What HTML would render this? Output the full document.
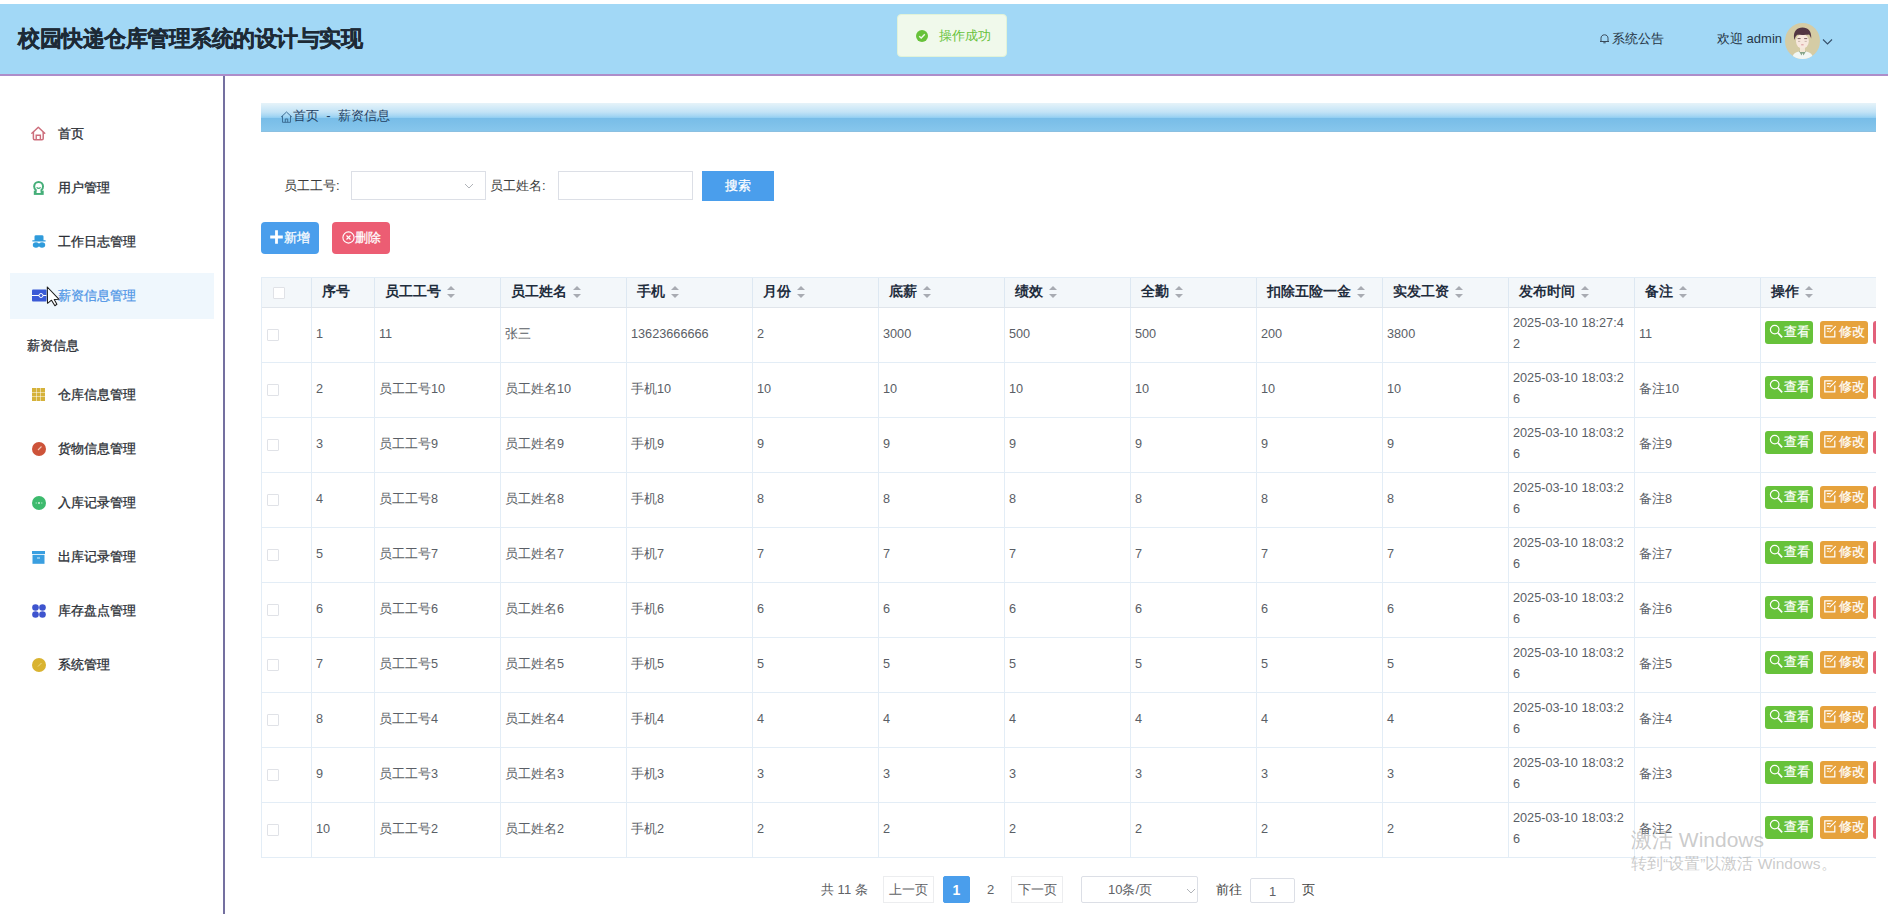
<!DOCTYPE html>
<html><head><meta charset="utf-8"><title>薪资信息</title>
<style>
html,body{margin:0;padding:0;}
body{width:1896px;height:914px;overflow:hidden;position:relative;background:#fff;font-family:"Liberation Sans",sans-serif;color:#303133;}
.a{position:absolute;white-space:nowrap;}
#hdr{position:absolute;left:0;top:4px;width:1888px;height:70px;background:#A2D8F6;border-bottom:2px solid #AE8DC9;}
#title{left:18px;top:22px;font-size:22px;letter-spacing:-0.5px;font-weight:bold;color:#1D2A36;-webkit-text-stroke:0.35px #1D2A36;line-height:34px;}
#toast{left:897px;top:14px;width:108px;height:41px;background:#F0F9EB;border:1px solid #E1F3D8;border-radius:4px;}
#toast .ic{position:absolute;left:18px;top:15px;width:12px;height:12px;border-radius:50%;background:#67C23A;}
#toast .tx{position:absolute;left:41px;top:12px;font-size:13px;line-height:18px;color:#67C23A;}
#notice{left:1599px;top:29.8px;font-size:13px;line-height:18px;color:#263646;}
#welcome{left:1717px;top:30.3px;font-size:13px;line-height:18px;color:#263646;}
#avatar{left:1785px;top:23px;width:35px;height:36px;border-radius:50%;background:#D5CCA5;overflow:hidden;}
#chev{left:1822px;top:37px;}
#side{position:absolute;left:223px;top:76px;width:2px;height:838px;background:#7470A0;}
.mi{position:absolute;left:0;width:214px;height:46px;}
.mi .ico{position:absolute;left:32px;}
.mi .lb{position:absolute;left:58px;top:15px;font-size:12.6px;line-height:18px;color:#2B2F36;-webkit-text-stroke:0.3px #2B2F36;}
#act{left:10px;top:273px;width:204px;height:46px;background:#EFF7FD;}
#crumb{left:261px;top:103px;width:1615px;height:29px;background:linear-gradient(to bottom,#E6F3F9 0px,#D6ECF8 4px,#C2E3F6 9px,#A4D6F3 13px,#93CFF2 14.5px,#78BDE8 15.5px,#7DC0E9 20px,#86C6EC 27.5px,#8DBDDC 29px);}
#crumb .tx{position:absolute;left:32px;top:4px;font-size:13px;line-height:18px;color:#1F3F62;}
.lbl{font-size:13px;line-height:18px;color:#3A3A3A;margin-top:1px;}
.inp{position:absolute;box-sizing:border-box;border:1px solid #DCDFE6;background:#fff;}
.btn{position:absolute;box-sizing:border-box;color:#fff;font-size:13px;line-height:18px;text-align:center;-webkit-text-stroke:0.25px #fff;}
#tbl{position:absolute;left:261px;top:277px;width:1615px;height:581px;overflow:hidden;border-top:1px solid #E3EDF6;border-left:1px solid #E3EDF6;box-sizing:border-box;}
.hrow{position:absolute;left:0;top:0;width:1700px;height:30px;background:#F3F7FA;border-bottom:1px solid #E0E5EB;box-sizing:border-box;}
.hc{position:absolute;top:0;height:29px;box-sizing:border-box;border-right:1px solid #DDE8F2;display:flex;align-items:center;padding-left:9.6px;}
.ht{font-size:13.6px;line-height:18px;font-weight:bold;color:#1F2D3D;white-space:nowrap;position:relative;top:-0.4px;}
.sort{position:relative;margin-left:6px;width:8px;height:12px;top:-0.3px;}
.sort i{position:absolute;left:0;width:0;height:0;border-left:4px solid transparent;border-right:4px solid transparent;}
.sort .up{top:0;border-bottom:4px solid #A8ABB2;}
.sort .dn{top:8px;border-top:4px solid #A8ABB2;}
.brow{position:absolute;left:0;width:1700px;height:55px;border-bottom:1px solid #E3EDF6;box-sizing:border-box;}
.bc{position:absolute;top:0;height:54px;box-sizing:border-box;border-right:1px solid #E3EDF6;}
.bt{position:absolute;left:4px;top:17.3px;font-size:12.7px;line-height:18px;color:#5A5E66;}
.bt.dt{top:4.6px;line-height:21.3px;}
.cb{position:absolute;width:12px;height:12px;box-sizing:border-box;border:1px solid #E0E2E7;background:#fff;border-radius:1px;}
.hcb{position:relative;left:1.4px;top:0;}
.bcb{left:5px;top:21px;}
.ob{position:absolute;top:13px;height:23px;width:48px;border-radius:3px;color:#fff;font-size:12.5px;line-height:23px;-webkit-text-stroke:0.2px #fff;}
.ob svg{position:absolute;left:5px;top:5px;}
.ob.g{left:4px;background:#67C23A;padding-left:19px;box-sizing:border-box;}
.ob.o{left:58.5px;background:#E6A23C;padding-left:19px;box-sizing:border-box;}
.ob.r{left:112px;background:#E2607A;}
.pg{font-size:13px;line-height:18px;color:#606266;}
.pbox{position:absolute;box-sizing:border-box;border:1px solid #ECEDEF;background:#fff;font-size:13px;line-height:26px;color:#606266;text-align:center;}
#wm1{left:1631px;top:826.5px;font-size:21px;line-height:26px;color:rgba(170,170,170,0.62);}
#wm2{left:1631px;top:854px;font-size:15.5px;line-height:19px;color:rgba(170,170,170,0.62);}

</style></head>
<body>
<div id="hdr"></div>
<div class="a" id="title">校园快递仓库管理系统的设计与实现</div>
<div class="a" id="toast"><span class="ic"><svg width="12" height="12" viewBox="0 0 12 12" style="position:absolute;left:0;top:0"><path d="M3.2 6.2L5.2 8L8.8 4.3" fill="none" stroke="#F0F9EB" stroke-width="1.4"/></svg></span><span class="tx">操作成功</span></div>
<div class="a" id="notice"><svg width="11" height="11" viewBox="0 0 11 11" style="position:relative;top:1px;margin-right:2px"><path d="M2 8.5V5.2C2 3.2 3.4 1.8 5.5 1.8S9 3.2 9 5.2V8.5ZM1 8.5H10M4.3 9.8H6.7" fill="none" stroke="#3A4A5A" stroke-width="1"/></svg>系统公告</div>
<div class="a" id="welcome">欢迎 admin</div>
<div class="a" id="avatar"><svg width="35" height="36" viewBox="0 0 35 36">
<path d="M7 36C7.5 30.5 11 28.3 17.5 28.3S27.5 30.5 28.5 36Z" fill="#F2F7F4"/>
<path d="M14 28.2L16.5 32.5L17.5 30L18.5 32.5L21 28.2Z" fill="#86A58A"/>
<rect x="15" y="23" width="5" height="6" fill="#F3E7D6"/>
<ellipse cx="17.4" cy="18.3" rx="6.4" ry="7.2" fill="#F7E8DE"/>
<path d="M9 15C8.2 8 12 4.4 17.5 4.4S26.8 8 26.2 15.5C25.5 13.5 25 12.5 24 11.5C21 12 16 12 12.5 11.8C11 12.6 10.2 14 9.6 17Z" fill="#523643"/>
<path d="M12.6 15.6H15.6M19.2 15.6H22.2" stroke="#6A5050" stroke-width="0.9"/>
<path d="M13 18.4H15.2M19.6 18.4H21.8" stroke="#B8A49A" stroke-width="0.7"/>
<path d="M16.2 21.8H18.6" stroke="#D9959A" stroke-width="1"/>
</svg></div>
<svg class="a" id="chev" width="11" height="9" viewBox="0 0 11 9"><path d="M1 2.5L5.5 7L10 2.5" fill="none" stroke="#35506A" stroke-width="1.1"/></svg>

<div id="side"></div>
<div class="a" id="act"></div>
<!-- menu -->
<div class="mi" style="top:110px">
  <svg class="ico" style="top:16px;left:31px" width="15" height="15" viewBox="0 0 15 15"><path d="M0.9 7.2L7.3 1.2L13.7 7.2" fill="none" stroke="#CD6E7C" stroke-width="1.5" stroke-linecap="round" stroke-linejoin="round"/><path d="M2.4 6V12.6Q2.4 13.8 3.6 13.8H11Q12.2 13.8 12.2 12.6V6" fill="none" stroke="#CD6E7C" stroke-width="1.5"/><path d="M5.2 13.8V9.3H9.4V13.8" fill="none" stroke="#CD6E7C" stroke-width="1.4"/></svg>
  <span class="lb">首页</span>
</div>
<div class="mi" style="top:164px">
  <svg class="ico" style="top:17px" width="14" height="14" viewBox="0 0 14 14"><circle cx="6.6" cy="5.4" r="5.4" fill="#44AE78"/><rect x="1.8" y="9.6" width="9.9" height="4.3" fill="#44AE78"/><circle cx="6.6" cy="5.4" r="3.4" fill="#fff"/><path d="M5 7.5H8.2L8.7 12H4.5Z" fill="#fff"/><path d="M4.6 6.4Q6.6 8.4 8.6 6.4" fill="none" stroke="#44AE78" stroke-width="1.3"/></svg>
  <span class="lb">用户管理</span>
</div>
<div class="mi" style="top:218px">
  <svg class="ico" style="top:17px" width="14" height="13" viewBox="0 0 14 13"><path d="M2.5 1.5Q2.5 0.3 4 0.3H10Q11.5 0.3 11.5 1.5V5.2H13.6V6.6H0.4V5.2H2.5Z" fill="#2F9BDB"/><ellipse cx="4" cy="10" rx="3.2" ry="2.7" fill="#2F9BDB"/><ellipse cx="10" cy="10" rx="3.2" ry="2.7" fill="#2F9BDB"/></svg>
  <span class="lb">工作日志管理</span>
</div>
<div class="mi" style="top:272px">
  <svg class="ico" style="top:17px" width="15" height="13" viewBox="0 0 15 13"><rect x="0" y="0.5" width="14.5" height="12" rx="1" fill="#3B5AD6"/><path d="M0 6.5H14.5" stroke="#fff" stroke-width="1"/><circle cx="9" cy="6.5" r="2" fill="#3B5AD6" stroke="#fff" stroke-width="1"/></svg>
  <span class="lb" style="color:#4F96E6;-webkit-text-stroke:0.25px #4F96E6">薪资信息管理</span>
</div>
<div class="mi" style="top:322px">
  <span class="lb" style="left:27px">薪资信息</span>
</div>
<div class="mi" style="top:371px">
  <svg class="ico" style="top:17px" width="13" height="13" viewBox="0 0 13 13" fill="#D5B23A"><rect x="0" y="0" width="4" height="4"/><rect x="4.5" y="0" width="4" height="4"/><rect x="9" y="0" width="4" height="4"/><rect x="0" y="4.5" width="4" height="4"/><rect x="4.5" y="4.5" width="4" height="4"/><rect x="9" y="4.5" width="4" height="4"/><rect x="0" y="9" width="4" height="4"/><rect x="4.5" y="9" width="4" height="4"/><rect x="9" y="9" width="4" height="4"/></svg>
  <span class="lb">仓库信息管理</span>
</div>
<div class="mi" style="top:425px">
  <svg class="ico" style="top:17px" width="14" height="14" viewBox="0 0 14 14"><circle cx="7" cy="7" r="7" fill="#CD5339"/><path d="M6 8L9.5 4.5" stroke="#F2C8B8" stroke-width="1.1"/></svg>
  <span class="lb">货物信息管理</span>
</div>
<div class="mi" style="top:479px">
  <svg class="ico" style="top:17px" width="14" height="14" viewBox="0 0 14 14"><circle cx="7" cy="7" r="7" fill="#3DBA6D"/><circle cx="4.2" cy="7" r="0.7" fill="#A8E4BE"/><circle cx="7" cy="7" r="0.9" fill="#E4F6EA"/><circle cx="9.8" cy="7" r="0.7" fill="#A8E4BE"/></svg>
  <span class="lb">入库记录管理</span>
</div>
<div class="mi" style="top:533px">
  <svg class="ico" style="top:18px" width="13" height="13" viewBox="0 0 13 13"><rect x="0" y="0" width="13" height="3" fill="#3A9FE0"/><rect x="0.5" y="3.8" width="12" height="9" fill="#3A9FE0"/><path d="M5 7H8" stroke="#D8EEFA" stroke-width="1"/></svg>
  <span class="lb">出库记录管理</span>
</div>
<div class="mi" style="top:587px">
  <svg class="ico" style="top:17px" width="14" height="14" viewBox="0 0 14 14" fill="#3E54CE"><circle cx="3.5" cy="3.5" r="3.3"/><circle cx="10.5" cy="3.5" r="3.3"/><circle cx="3.5" cy="10.5" r="3.3"/><circle cx="10.5" cy="10.5" r="3.3"/></svg>
  <span class="lb">库存盘点管理</span>
</div>
<div class="mi" style="top:641px">
  <svg class="ico" style="top:17px" width="14" height="14" viewBox="0 0 14 14"><circle cx="7" cy="7" r="7" fill="#D9B330"/><path d="M6 8.5L9.5 5" stroke="#EEDC8A" stroke-width="1"/></svg>
  <span class="lb">系统管理</span>
</div>
<!-- cursor -->
<svg class="a" style="left:46px;top:286px" width="14" height="21" viewBox="0 0 14 21"><path d="M1.3 1L1.5 17.3L5.5 14.2L8.9 19.7L10.9 18.3L8.2 13.6L12.8 13.2Z" fill="#fff" stroke="#1A1A1A" stroke-width="1.05" stroke-linejoin="round"/></svg>

<div class="a" id="crumb"><svg width="13" height="12" viewBox="0 0 13 12" style="position:absolute;left:19px;top:8px"><path d="M1 6.2L6.5 1L12 6.2M2.5 5V11.3H10.5V5M5.3 11.3V8H7.7V11.3" fill="none" stroke="#3E6F96" stroke-width="1"/></svg><span class="tx">首页&nbsp;&nbsp;-&nbsp;&nbsp;薪资信息</span></div>

<!-- search -->
<div class="a lbl" style="left:284px;top:176px">员工工号:</div>
<div class="inp" style="left:351px;top:171px;width:135px;height:29px"><svg width="10" height="7" viewBox="0 0 10 7" style="position:absolute;left:112px;top:11px"><path d="M1 1L5 5L9 1" fill="none" stroke="#B0B3B8" stroke-width="1"/></svg></div>
<div class="a lbl" style="left:490px;top:176px">员工姓名:</div>
<div class="inp" style="left:558px;top:171px;width:135px;height:29px"></div>
<div class="btn" style="left:702px;top:171px;width:72px;height:30px;background:#4A9EEC;line-height:30px">搜索</div>

<div class="btn" style="left:261px;top:222px;width:58px;height:32px;background:#4A9EEC;border-radius:4px;line-height:32px"><svg width="13" height="14" viewBox="0 0 13 14" style="position:relative;top:1.5px;margin-right:0.5px"><path d="M6.5 0.3V13.7M0.2 7H12.8" stroke="#fff" stroke-width="2.8"/></svg>新增</div>
<div class="btn" style="left:332px;top:222px;width:58px;height:32px;background:#EC5D73;border-radius:4px;line-height:32px"><svg width="13" height="13" viewBox="0 0 13 13" style="position:relative;top:2px"><circle cx="6.5" cy="6.5" r="5.6" fill="none" stroke="#fff" stroke-width="1.1"/><path d="M4.5 4.5L8.5 8.5M8.5 4.5L4.5 8.5" stroke="#fff" stroke-width="1.1"/></svg>删除</div>

<div id="tbl">
<div class="hrow">
<div class="hc" style="left:0px;width:50px"><span class="cb hcb"></span></div>
<div class="hc" style="left:50px;width:63px"><span class="ht">序号</span></div>
<div class="hc" style="left:113px;width:126px"><span class="ht">员工工号</span><span class="sort"><i class="up"></i><i class="dn"></i></span></div>
<div class="hc" style="left:239px;width:126px"><span class="ht">员工姓名</span><span class="sort"><i class="up"></i><i class="dn"></i></span></div>
<div class="hc" style="left:365px;width:126px"><span class="ht">手机</span><span class="sort"><i class="up"></i><i class="dn"></i></span></div>
<div class="hc" style="left:491px;width:126px"><span class="ht">月份</span><span class="sort"><i class="up"></i><i class="dn"></i></span></div>
<div class="hc" style="left:617px;width:126px"><span class="ht">底薪</span><span class="sort"><i class="up"></i><i class="dn"></i></span></div>
<div class="hc" style="left:743px;width:126px"><span class="ht">绩效</span><span class="sort"><i class="up"></i><i class="dn"></i></span></div>
<div class="hc" style="left:869px;width:126px"><span class="ht">全勤</span><span class="sort"><i class="up"></i><i class="dn"></i></span></div>
<div class="hc" style="left:995px;width:126px"><span class="ht">扣除五险一金</span><span class="sort"><i class="up"></i><i class="dn"></i></span></div>
<div class="hc" style="left:1121px;width:126px"><span class="ht">实发工资</span><span class="sort"><i class="up"></i><i class="dn"></i></span></div>
<div class="hc" style="left:1247px;width:126px"><span class="ht">发布时间</span><span class="sort"><i class="up"></i><i class="dn"></i></span></div>
<div class="hc" style="left:1373px;width:126px"><span class="ht">备注</span><span class="sort"><i class="up"></i><i class="dn"></i></span></div>
<div class="hc" style="left:1499px;width:116px"><span class="ht">操作</span><span class="sort"><i class="up"></i><i class="dn"></i></span></div>
</div>
<div class="brow" style="top:30px">
<div class="bc" style="left:0px;width:50px"><span class="cb bcb"></span></div>
<div class="bc" style="left:50px;width:63px"><span class="bt">1</span></div>
<div class="bc" style="left:113px;width:126px"><span class="bt">11</span></div>
<div class="bc" style="left:239px;width:126px"><span class="bt">张三</span></div>
<div class="bc" style="left:365px;width:126px"><span class="bt">13623666666</span></div>
<div class="bc" style="left:491px;width:126px"><span class="bt">2</span></div>
<div class="bc" style="left:617px;width:126px"><span class="bt">3000</span></div>
<div class="bc" style="left:743px;width:126px"><span class="bt">500</span></div>
<div class="bc" style="left:869px;width:126px"><span class="bt">500</span></div>
<div class="bc" style="left:995px;width:126px"><span class="bt">200</span></div>
<div class="bc" style="left:1121px;width:126px"><span class="bt">3800</span></div>
<div class="bc" style="left:1247px;width:126px"><span class="bt dt">2025-03-10 18:27:4<br>2</span></div>
<div class="bc" style="left:1373px;width:126px"><span class="bt">11</span></div>
<div class="bc" style="left:1499px;width:116px"><span class="ob g"><svg width="14" height="14" viewBox="0 0 14 14" style="left:4px;top:3px"><circle cx="5.7" cy="5.6" r="4.3" fill="none" stroke="#fff" stroke-width="1.2"/><path d="M8.9 8.9L13.2 13.3" stroke="#fff" stroke-width="1.7"/></svg>查看</span><span class="ob o"><svg width="13" height="13" viewBox="0 0 13 13" style="left:4px;top:4px"><path d="M8.5 0.8H0.8V11.8H10.8V5.5" fill="none" stroke="#fff" stroke-width="1.2"/><path d="M2.8 3.6H6.6M2.8 6.2H5.2M5.6 7.4L11.8 1.2" stroke="#fff" stroke-width="1.1"/></svg>修改</span><span class="ob r"></span></div>
</div>
<div class="brow" style="top:85px">
<div class="bc" style="left:0px;width:50px"><span class="cb bcb"></span></div>
<div class="bc" style="left:50px;width:63px"><span class="bt">2</span></div>
<div class="bc" style="left:113px;width:126px"><span class="bt">员工工号10</span></div>
<div class="bc" style="left:239px;width:126px"><span class="bt">员工姓名10</span></div>
<div class="bc" style="left:365px;width:126px"><span class="bt">手机10</span></div>
<div class="bc" style="left:491px;width:126px"><span class="bt">10</span></div>
<div class="bc" style="left:617px;width:126px"><span class="bt">10</span></div>
<div class="bc" style="left:743px;width:126px"><span class="bt">10</span></div>
<div class="bc" style="left:869px;width:126px"><span class="bt">10</span></div>
<div class="bc" style="left:995px;width:126px"><span class="bt">10</span></div>
<div class="bc" style="left:1121px;width:126px"><span class="bt">10</span></div>
<div class="bc" style="left:1247px;width:126px"><span class="bt dt">2025-03-10 18:03:2<br>6</span></div>
<div class="bc" style="left:1373px;width:126px"><span class="bt">备注10</span></div>
<div class="bc" style="left:1499px;width:116px"><span class="ob g"><svg width="14" height="14" viewBox="0 0 14 14" style="left:4px;top:3px"><circle cx="5.7" cy="5.6" r="4.3" fill="none" stroke="#fff" stroke-width="1.2"/><path d="M8.9 8.9L13.2 13.3" stroke="#fff" stroke-width="1.7"/></svg>查看</span><span class="ob o"><svg width="13" height="13" viewBox="0 0 13 13" style="left:4px;top:4px"><path d="M8.5 0.8H0.8V11.8H10.8V5.5" fill="none" stroke="#fff" stroke-width="1.2"/><path d="M2.8 3.6H6.6M2.8 6.2H5.2M5.6 7.4L11.8 1.2" stroke="#fff" stroke-width="1.1"/></svg>修改</span><span class="ob r"></span></div>
</div>
<div class="brow" style="top:140px">
<div class="bc" style="left:0px;width:50px"><span class="cb bcb"></span></div>
<div class="bc" style="left:50px;width:63px"><span class="bt">3</span></div>
<div class="bc" style="left:113px;width:126px"><span class="bt">员工工号9</span></div>
<div class="bc" style="left:239px;width:126px"><span class="bt">员工姓名9</span></div>
<div class="bc" style="left:365px;width:126px"><span class="bt">手机9</span></div>
<div class="bc" style="left:491px;width:126px"><span class="bt">9</span></div>
<div class="bc" style="left:617px;width:126px"><span class="bt">9</span></div>
<div class="bc" style="left:743px;width:126px"><span class="bt">9</span></div>
<div class="bc" style="left:869px;width:126px"><span class="bt">9</span></div>
<div class="bc" style="left:995px;width:126px"><span class="bt">9</span></div>
<div class="bc" style="left:1121px;width:126px"><span class="bt">9</span></div>
<div class="bc" style="left:1247px;width:126px"><span class="bt dt">2025-03-10 18:03:2<br>6</span></div>
<div class="bc" style="left:1373px;width:126px"><span class="bt">备注9</span></div>
<div class="bc" style="left:1499px;width:116px"><span class="ob g"><svg width="14" height="14" viewBox="0 0 14 14" style="left:4px;top:3px"><circle cx="5.7" cy="5.6" r="4.3" fill="none" stroke="#fff" stroke-width="1.2"/><path d="M8.9 8.9L13.2 13.3" stroke="#fff" stroke-width="1.7"/></svg>查看</span><span class="ob o"><svg width="13" height="13" viewBox="0 0 13 13" style="left:4px;top:4px"><path d="M8.5 0.8H0.8V11.8H10.8V5.5" fill="none" stroke="#fff" stroke-width="1.2"/><path d="M2.8 3.6H6.6M2.8 6.2H5.2M5.6 7.4L11.8 1.2" stroke="#fff" stroke-width="1.1"/></svg>修改</span><span class="ob r"></span></div>
</div>
<div class="brow" style="top:195px">
<div class="bc" style="left:0px;width:50px"><span class="cb bcb"></span></div>
<div class="bc" style="left:50px;width:63px"><span class="bt">4</span></div>
<div class="bc" style="left:113px;width:126px"><span class="bt">员工工号8</span></div>
<div class="bc" style="left:239px;width:126px"><span class="bt">员工姓名8</span></div>
<div class="bc" style="left:365px;width:126px"><span class="bt">手机8</span></div>
<div class="bc" style="left:491px;width:126px"><span class="bt">8</span></div>
<div class="bc" style="left:617px;width:126px"><span class="bt">8</span></div>
<div class="bc" style="left:743px;width:126px"><span class="bt">8</span></div>
<div class="bc" style="left:869px;width:126px"><span class="bt">8</span></div>
<div class="bc" style="left:995px;width:126px"><span class="bt">8</span></div>
<div class="bc" style="left:1121px;width:126px"><span class="bt">8</span></div>
<div class="bc" style="left:1247px;width:126px"><span class="bt dt">2025-03-10 18:03:2<br>6</span></div>
<div class="bc" style="left:1373px;width:126px"><span class="bt">备注8</span></div>
<div class="bc" style="left:1499px;width:116px"><span class="ob g"><svg width="14" height="14" viewBox="0 0 14 14" style="left:4px;top:3px"><circle cx="5.7" cy="5.6" r="4.3" fill="none" stroke="#fff" stroke-width="1.2"/><path d="M8.9 8.9L13.2 13.3" stroke="#fff" stroke-width="1.7"/></svg>查看</span><span class="ob o"><svg width="13" height="13" viewBox="0 0 13 13" style="left:4px;top:4px"><path d="M8.5 0.8H0.8V11.8H10.8V5.5" fill="none" stroke="#fff" stroke-width="1.2"/><path d="M2.8 3.6H6.6M2.8 6.2H5.2M5.6 7.4L11.8 1.2" stroke="#fff" stroke-width="1.1"/></svg>修改</span><span class="ob r"></span></div>
</div>
<div class="brow" style="top:250px">
<div class="bc" style="left:0px;width:50px"><span class="cb bcb"></span></div>
<div class="bc" style="left:50px;width:63px"><span class="bt">5</span></div>
<div class="bc" style="left:113px;width:126px"><span class="bt">员工工号7</span></div>
<div class="bc" style="left:239px;width:126px"><span class="bt">员工姓名7</span></div>
<div class="bc" style="left:365px;width:126px"><span class="bt">手机7</span></div>
<div class="bc" style="left:491px;width:126px"><span class="bt">7</span></div>
<div class="bc" style="left:617px;width:126px"><span class="bt">7</span></div>
<div class="bc" style="left:743px;width:126px"><span class="bt">7</span></div>
<div class="bc" style="left:869px;width:126px"><span class="bt">7</span></div>
<div class="bc" style="left:995px;width:126px"><span class="bt">7</span></div>
<div class="bc" style="left:1121px;width:126px"><span class="bt">7</span></div>
<div class="bc" style="left:1247px;width:126px"><span class="bt dt">2025-03-10 18:03:2<br>6</span></div>
<div class="bc" style="left:1373px;width:126px"><span class="bt">备注7</span></div>
<div class="bc" style="left:1499px;width:116px"><span class="ob g"><svg width="14" height="14" viewBox="0 0 14 14" style="left:4px;top:3px"><circle cx="5.7" cy="5.6" r="4.3" fill="none" stroke="#fff" stroke-width="1.2"/><path d="M8.9 8.9L13.2 13.3" stroke="#fff" stroke-width="1.7"/></svg>查看</span><span class="ob o"><svg width="13" height="13" viewBox="0 0 13 13" style="left:4px;top:4px"><path d="M8.5 0.8H0.8V11.8H10.8V5.5" fill="none" stroke="#fff" stroke-width="1.2"/><path d="M2.8 3.6H6.6M2.8 6.2H5.2M5.6 7.4L11.8 1.2" stroke="#fff" stroke-width="1.1"/></svg>修改</span><span class="ob r"></span></div>
</div>
<div class="brow" style="top:305px">
<div class="bc" style="left:0px;width:50px"><span class="cb bcb"></span></div>
<div class="bc" style="left:50px;width:63px"><span class="bt">6</span></div>
<div class="bc" style="left:113px;width:126px"><span class="bt">员工工号6</span></div>
<div class="bc" style="left:239px;width:126px"><span class="bt">员工姓名6</span></div>
<div class="bc" style="left:365px;width:126px"><span class="bt">手机6</span></div>
<div class="bc" style="left:491px;width:126px"><span class="bt">6</span></div>
<div class="bc" style="left:617px;width:126px"><span class="bt">6</span></div>
<div class="bc" style="left:743px;width:126px"><span class="bt">6</span></div>
<div class="bc" style="left:869px;width:126px"><span class="bt">6</span></div>
<div class="bc" style="left:995px;width:126px"><span class="bt">6</span></div>
<div class="bc" style="left:1121px;width:126px"><span class="bt">6</span></div>
<div class="bc" style="left:1247px;width:126px"><span class="bt dt">2025-03-10 18:03:2<br>6</span></div>
<div class="bc" style="left:1373px;width:126px"><span class="bt">备注6</span></div>
<div class="bc" style="left:1499px;width:116px"><span class="ob g"><svg width="14" height="14" viewBox="0 0 14 14" style="left:4px;top:3px"><circle cx="5.7" cy="5.6" r="4.3" fill="none" stroke="#fff" stroke-width="1.2"/><path d="M8.9 8.9L13.2 13.3" stroke="#fff" stroke-width="1.7"/></svg>查看</span><span class="ob o"><svg width="13" height="13" viewBox="0 0 13 13" style="left:4px;top:4px"><path d="M8.5 0.8H0.8V11.8H10.8V5.5" fill="none" stroke="#fff" stroke-width="1.2"/><path d="M2.8 3.6H6.6M2.8 6.2H5.2M5.6 7.4L11.8 1.2" stroke="#fff" stroke-width="1.1"/></svg>修改</span><span class="ob r"></span></div>
</div>
<div class="brow" style="top:360px">
<div class="bc" style="left:0px;width:50px"><span class="cb bcb"></span></div>
<div class="bc" style="left:50px;width:63px"><span class="bt">7</span></div>
<div class="bc" style="left:113px;width:126px"><span class="bt">员工工号5</span></div>
<div class="bc" style="left:239px;width:126px"><span class="bt">员工姓名5</span></div>
<div class="bc" style="left:365px;width:126px"><span class="bt">手机5</span></div>
<div class="bc" style="left:491px;width:126px"><span class="bt">5</span></div>
<div class="bc" style="left:617px;width:126px"><span class="bt">5</span></div>
<div class="bc" style="left:743px;width:126px"><span class="bt">5</span></div>
<div class="bc" style="left:869px;width:126px"><span class="bt">5</span></div>
<div class="bc" style="left:995px;width:126px"><span class="bt">5</span></div>
<div class="bc" style="left:1121px;width:126px"><span class="bt">5</span></div>
<div class="bc" style="left:1247px;width:126px"><span class="bt dt">2025-03-10 18:03:2<br>6</span></div>
<div class="bc" style="left:1373px;width:126px"><span class="bt">备注5</span></div>
<div class="bc" style="left:1499px;width:116px"><span class="ob g"><svg width="14" height="14" viewBox="0 0 14 14" style="left:4px;top:3px"><circle cx="5.7" cy="5.6" r="4.3" fill="none" stroke="#fff" stroke-width="1.2"/><path d="M8.9 8.9L13.2 13.3" stroke="#fff" stroke-width="1.7"/></svg>查看</span><span class="ob o"><svg width="13" height="13" viewBox="0 0 13 13" style="left:4px;top:4px"><path d="M8.5 0.8H0.8V11.8H10.8V5.5" fill="none" stroke="#fff" stroke-width="1.2"/><path d="M2.8 3.6H6.6M2.8 6.2H5.2M5.6 7.4L11.8 1.2" stroke="#fff" stroke-width="1.1"/></svg>修改</span><span class="ob r"></span></div>
</div>
<div class="brow" style="top:415px">
<div class="bc" style="left:0px;width:50px"><span class="cb bcb"></span></div>
<div class="bc" style="left:50px;width:63px"><span class="bt">8</span></div>
<div class="bc" style="left:113px;width:126px"><span class="bt">员工工号4</span></div>
<div class="bc" style="left:239px;width:126px"><span class="bt">员工姓名4</span></div>
<div class="bc" style="left:365px;width:126px"><span class="bt">手机4</span></div>
<div class="bc" style="left:491px;width:126px"><span class="bt">4</span></div>
<div class="bc" style="left:617px;width:126px"><span class="bt">4</span></div>
<div class="bc" style="left:743px;width:126px"><span class="bt">4</span></div>
<div class="bc" style="left:869px;width:126px"><span class="bt">4</span></div>
<div class="bc" style="left:995px;width:126px"><span class="bt">4</span></div>
<div class="bc" style="left:1121px;width:126px"><span class="bt">4</span></div>
<div class="bc" style="left:1247px;width:126px"><span class="bt dt">2025-03-10 18:03:2<br>6</span></div>
<div class="bc" style="left:1373px;width:126px"><span class="bt">备注4</span></div>
<div class="bc" style="left:1499px;width:116px"><span class="ob g"><svg width="14" height="14" viewBox="0 0 14 14" style="left:4px;top:3px"><circle cx="5.7" cy="5.6" r="4.3" fill="none" stroke="#fff" stroke-width="1.2"/><path d="M8.9 8.9L13.2 13.3" stroke="#fff" stroke-width="1.7"/></svg>查看</span><span class="ob o"><svg width="13" height="13" viewBox="0 0 13 13" style="left:4px;top:4px"><path d="M8.5 0.8H0.8V11.8H10.8V5.5" fill="none" stroke="#fff" stroke-width="1.2"/><path d="M2.8 3.6H6.6M2.8 6.2H5.2M5.6 7.4L11.8 1.2" stroke="#fff" stroke-width="1.1"/></svg>修改</span><span class="ob r"></span></div>
</div>
<div class="brow" style="top:470px">
<div class="bc" style="left:0px;width:50px"><span class="cb bcb"></span></div>
<div class="bc" style="left:50px;width:63px"><span class="bt">9</span></div>
<div class="bc" style="left:113px;width:126px"><span class="bt">员工工号3</span></div>
<div class="bc" style="left:239px;width:126px"><span class="bt">员工姓名3</span></div>
<div class="bc" style="left:365px;width:126px"><span class="bt">手机3</span></div>
<div class="bc" style="left:491px;width:126px"><span class="bt">3</span></div>
<div class="bc" style="left:617px;width:126px"><span class="bt">3</span></div>
<div class="bc" style="left:743px;width:126px"><span class="bt">3</span></div>
<div class="bc" style="left:869px;width:126px"><span class="bt">3</span></div>
<div class="bc" style="left:995px;width:126px"><span class="bt">3</span></div>
<div class="bc" style="left:1121px;width:126px"><span class="bt">3</span></div>
<div class="bc" style="left:1247px;width:126px"><span class="bt dt">2025-03-10 18:03:2<br>6</span></div>
<div class="bc" style="left:1373px;width:126px"><span class="bt">备注3</span></div>
<div class="bc" style="left:1499px;width:116px"><span class="ob g"><svg width="14" height="14" viewBox="0 0 14 14" style="left:4px;top:3px"><circle cx="5.7" cy="5.6" r="4.3" fill="none" stroke="#fff" stroke-width="1.2"/><path d="M8.9 8.9L13.2 13.3" stroke="#fff" stroke-width="1.7"/></svg>查看</span><span class="ob o"><svg width="13" height="13" viewBox="0 0 13 13" style="left:4px;top:4px"><path d="M8.5 0.8H0.8V11.8H10.8V5.5" fill="none" stroke="#fff" stroke-width="1.2"/><path d="M2.8 3.6H6.6M2.8 6.2H5.2M5.6 7.4L11.8 1.2" stroke="#fff" stroke-width="1.1"/></svg>修改</span><span class="ob r"></span></div>
</div>
<div class="brow" style="top:525px">
<div class="bc" style="left:0px;width:50px"><span class="cb bcb"></span></div>
<div class="bc" style="left:50px;width:63px"><span class="bt">10</span></div>
<div class="bc" style="left:113px;width:126px"><span class="bt">员工工号2</span></div>
<div class="bc" style="left:239px;width:126px"><span class="bt">员工姓名2</span></div>
<div class="bc" style="left:365px;width:126px"><span class="bt">手机2</span></div>
<div class="bc" style="left:491px;width:126px"><span class="bt">2</span></div>
<div class="bc" style="left:617px;width:126px"><span class="bt">2</span></div>
<div class="bc" style="left:743px;width:126px"><span class="bt">2</span></div>
<div class="bc" style="left:869px;width:126px"><span class="bt">2</span></div>
<div class="bc" style="left:995px;width:126px"><span class="bt">2</span></div>
<div class="bc" style="left:1121px;width:126px"><span class="bt">2</span></div>
<div class="bc" style="left:1247px;width:126px"><span class="bt dt">2025-03-10 18:03:2<br>6</span></div>
<div class="bc" style="left:1373px;width:126px"><span class="bt">备注2</span></div>
<div class="bc" style="left:1499px;width:116px"><span class="ob g"><svg width="14" height="14" viewBox="0 0 14 14" style="left:4px;top:3px"><circle cx="5.7" cy="5.6" r="4.3" fill="none" stroke="#fff" stroke-width="1.2"/><path d="M8.9 8.9L13.2 13.3" stroke="#fff" stroke-width="1.7"/></svg>查看</span><span class="ob o"><svg width="13" height="13" viewBox="0 0 13 13" style="left:4px;top:4px"><path d="M8.5 0.8H0.8V11.8H10.8V5.5" fill="none" stroke="#fff" stroke-width="1.2"/><path d="M2.8 3.6H6.6M2.8 6.2H5.2M5.6 7.4L11.8 1.2" stroke="#fff" stroke-width="1.1"/></svg>修改</span><span class="ob r"></span></div>
</div>
</div>

<!-- pagination -->
<div class="a pg" style="left:821px;top:881px">共 11 条</div>
<div class="pbox" style="left:883px;top:876px;width:51px;height:27px">上一页</div>
<div class="pbox" style="left:943px;top:876px;width:27px;height:27px;background:#4A9EEC;border-color:#4A9EEC;color:#fff;font-weight:bold;border-radius:2px;font-size:14px">1</div>
<div class="a pg" style="left:987px;top:881px">2</div>
<div class="pbox" style="left:1011px;top:876px;width:52px;height:27px">下一页</div>
<div class="pbox" style="left:1081px;top:876px;width:117px;height:27px;border-color:#DCDFE6;border-radius:2px;text-align:left;padding-left:26px">10条/页<svg width="10" height="7" viewBox="0 0 10 7" style="position:absolute;left:104px;top:11px"><path d="M1 1L5 5L9 1" fill="none" stroke="#B0B3B8" stroke-width="1"/></svg></div>
<div class="a pg" style="left:1216px;top:881px;color:#444">前往</div>
<div class="pbox" style="left:1250px;top:878px;width:45px;height:25px;border-color:#DCDFE6;border-radius:2px">1</div>
<div class="a pg" style="left:1302px;top:881px;color:#444">页</div>

<div class="a" id="wm1">激活 Windows</div>
<div class="a" id="wm2">转到“设置”以激活 Windows。</div>

</body></html>
